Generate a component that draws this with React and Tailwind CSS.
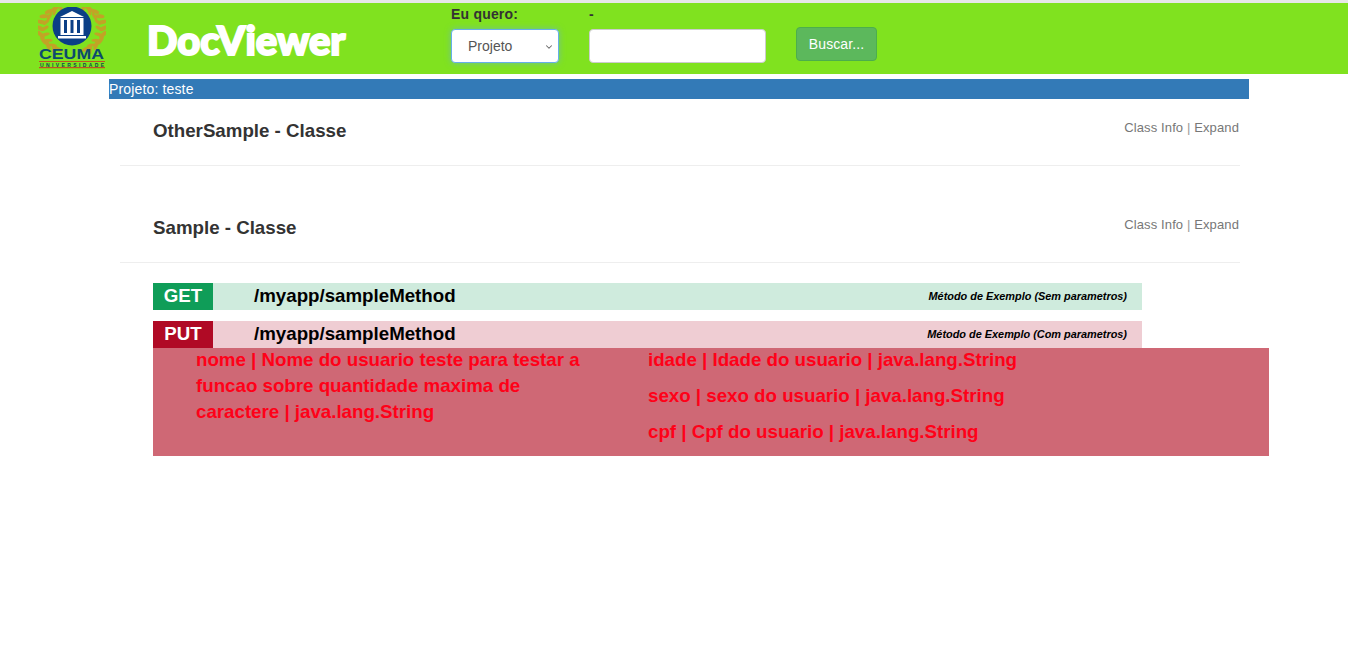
import { ChevronDown } from 'lucide-react'

const sans = { fontFamily: '"Liberation Sans", Arial, sans-serif' }

// folhas do louro, de cima para baixo em cada lado
const leaves = [0, 1, 2, 3, 4, 5, 6, 7, 8].map((i) => {
  const deg = 118 + i * 15
  const a = (deg * Math.PI) / 180
  return { i, dx: Math.cos(a) * 30, dy: Math.sin(a) * 24, rot: deg - 90 }
})

function Logo() {
  return (
    <svg width="68" height="62" viewBox="0 0 68 62" className="block shrink-0">
      {leaves.map((l) => (
        <g key={l.i} fill="#c2a326">
          <ellipse cx={34 + l.dx - 2} cy={22 - l.dy} rx="2" ry="5" transform={`rotate(${l.rot + 28} ${34 + l.dx - 2} ${22 - l.dy})`} />
          <ellipse cx={34 + l.dx + 3} cy={22 - l.dy} rx="1.6" ry="4" transform={`rotate(${l.rot - 28} ${34 + l.dx + 3} ${22 - l.dy})`} />
          <ellipse cx={34 - l.dx + 2} cy={22 - l.dy} rx="2" ry="5" transform={`rotate(${-l.rot - 28} ${34 - l.dx + 2} ${22 - l.dy})`} />
          <ellipse cx={34 - l.dx - 3} cy={22 - l.dy} rx="1.6" ry="4" transform={`rotate(${-l.rot + 28} ${34 - l.dx - 3} ${22 - l.dy})`} />
        </g>
      ))}
      <circle cx="34" cy="19" r="19.5" fill="#0b3f86" />
      <path d="M34 4 L46 10 L22 10 Z" fill="#fff" />
      <rect x="22.5" y="11" width="23" height="17" fill="#fff" />
      <rect x="26" y="13" width="3" height="13" fill="#0b3f86" />
      <rect x="32.5" y="13" width="3" height="13" fill="#0b3f86" />
      <rect x="39" y="13" width="3" height="13" fill="#0b3f86" />
      <rect x="20" y="29" width="28" height="2.5" fill="#fff" />
      <text x="1" y="52" textLength="65" lengthAdjust="spacingAndGlyphs" fontSize="14" fontWeight="700" fill="#0d4a6e">CEUMA</text>
      <rect x="1" y="54" width="66" height="1" fill="#c0531f" />
      <text x="2" y="59.5" textLength="64" lengthAdjust="spacing" fontSize="5" fontWeight="700" fill="#0d4a4e">UNIVERSIDADE</text>
      <rect x="1" y="60" width="66" height="1.2" fill="#c0531f" />
    </svg>
  )
}

function Section({ title }) {
  return (
    <div className="ml-[11px] mr-[9px] h-[67px] flex justify-between border-b border-[#eeeeee]">
      <h2 className="pl-[33px] pt-[20px] text-[18.72px] leading-[24px] font-bold text-[#333333]">{title}</h2>
      <div className="pt-[20px] pr-[1px] text-[13px] leading-[17px] text-[#777777] tracking-[0.12px]">
        Class Info <span className="text-[#999999]">|</span> Expand
      </div>
    </div>
  )
}

function Method({ verb, color, bar, path, text }) {
  return (
    <div className={`h-[27px] w-[989px] flex items-center ${bar}`}>
      <div className={`w-[60px] h-full pb-[1px] flex items-center justify-center text-white text-[18.72px] font-bold ${color}`}>{verb}</div>
      <div className="ml-[41px] pb-[1px] text-[18.72px] font-bold text-black">{path}</div>
      <div className="ml-auto pr-[15px] text-[10.9px] font-bold italic text-black">{text}</div>
    </div>
  )
}

export default function App() {
  return (
    <div className="min-h-[660px] bg-white text-[14px]" style={sans}>
      <div className="h-[3px] bg-[#e7e7e7]" />
      <header className="h-[71px] bg-[#80e21f] flex">
        <div className="ml-[38px] mt-[4px]"><Logo /></div>
        <div
          className="ml-[41px] mt-[15px] w-[304px] text-white text-[40px] leading-[44px] font-black [-webkit-text-stroke:2px_white]"
          style={{ fontFamily: 'Lato, sans-serif' }}
        >
          DocViewer
        </div>
        <div className="w-[108px] mr-[30px]">
          <div className="h-[26px] pt-[3px] text-[14px] leading-[17px] font-bold text-[#333333] tracking-[0.2px]">Eu quero:</div>
          <div className="relative">
            <select className="appearance-none w-[108px] h-[34px] pl-[16px] bg-white rounded-[4px] border border-[#66afe9] shadow-[0_0_6px_rgba(102,175,233,0.6)] text-[14px] text-[#555555]">
              <option>Projeto</option>
            </select>
            <ChevronDown size={10} strokeWidth={2.5} className="absolute right-[5px] top-[13px] text-[#666666] pointer-events-none" />
          </div>
        </div>
        <div className="w-[177px] mr-[30px]">
          <div className="h-[26px] pt-[3px] text-[14px] leading-[17px] font-bold text-[#333333]">-</div>
          <input className="block w-[177px] h-[34px] bg-white rounded-[4px] border border-[#cccccc]" />
        </div>
        <button className="mt-[24px] w-[81px] h-[34px] rounded-[4px] bg-[#5cb85c] border border-[#4cae4c] text-white text-[14px] tracking-[0.1px]">
          Buscar...
        </button>
      </header>

      <main className="w-[1140px] ml-[109px] mt-[5px]">
        <div className="h-[20px] bg-[#337ab7] text-white text-[14px] leading-[20px] tracking-[0.15px]">Projeto: teste</div>

        <Section title="OtherSample - Classe" />
        <div className="h-[30px]" />
        <Section title="Sample - Classe" />

        <div className="ml-[44px] mt-[20px]">
          <Method
            verb="GET"
            color="bg-[#0f9d58]"
            bar="bg-[#cfebdd]"
            path="/myapp/sampleMethod"
            text="Método de Exemplo (Sem parametros)"
          />
          <div className="mt-[11px]">
            <Method
              verb="PUT"
              color="bg-[#b00a25]"
              bar="bg-[#efcdd3]"
              path="/myapp/sampleMethod"
              text="Método de Exemplo (Com parametros)"
            />
          </div>
          <div className="w-[1116px] h-[108px] bg-[#cf6875] text-[#ff0018] text-[18.72px] leading-[26px] font-bold flex">
            <div className="ml-[43px] w-[452px] pr-[50px] -mt-[1px]">
              nome | Nome do usuario teste para testar a funcao sobre quantidade maxima de caractere | java.lang.String
            </div>
            <div className="-mt-[1px]">
              <p className="h-[36px]">idade | Idade do usuario | java.lang.String</p>
              <p className="h-[36px]">sexo | sexo do usuario | java.lang.String</p>
              <p className="h-[36px]">cpf | Cpf do usuario | java.lang.String</p>
            </div>
          </div>
        </div>
      </main>
    </div>
  )
}
